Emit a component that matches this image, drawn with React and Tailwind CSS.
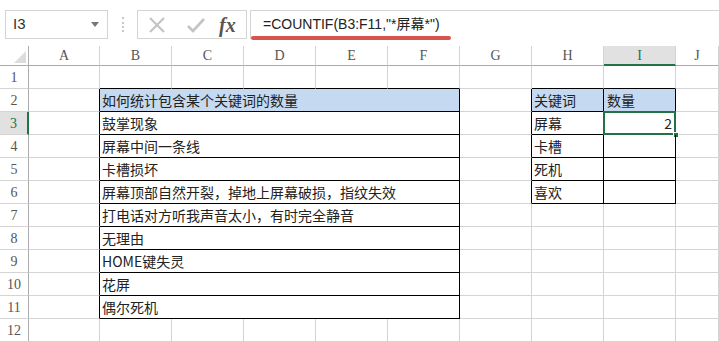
import React from 'react';

const COL_LETTERS = ['A', 'B', 'C', 'D', 'E', 'F', 'G', 'H', 'I', 'J'];

const ITEMS = [
    '如何统计包含某个关键词的数量',
    '鼓掌现象',
    '屏幕中间一条线',
    '卡槽损坏',
    '屏幕顶部自然开裂，掉地上屏幕破损，指纹失效',
    '打电话对方听我声音太小，有时完全静音',
    '无理由',
    'HOME键失灵',
    '花屏',
    '偶尔死机',
];

const KEYWORDS = [
    ['关键词', '数量'],
    ['屏幕', '2'],
    ['卡槽', ''],
    ['死机', ''],
    ['喜欢', ''],
];

const cjk = "font-['Noto_Sans_CJK_SC','Noto_Sans',sans-serif]";
const serif = "font-['Liberation_Serif','DejaVu_Serif',serif]";

function FormulaBar() {
    return (
        <div className="h-[46px] flex items-start pt-[10px] bg-white">
            <div className="ml-[5px] w-[103px] h-[29px] border border-[#d4d4d4] flex items-center justify-between pl-[7px] pr-[8px]">
                <span className="font-['Liberation_Sans',sans-serif] text-[15px] text-[#333]">I3</span>
                <svg width="8" height="5" viewBox="0 0 8 5"><path d="M0 0h8L4 5z" fill="#777" /></svg>
            </div>
            <div className="w-[29px] h-[29px] flex items-center justify-center">
                <div className="h-[15px] border-l-2 border-dotted border-[#c8c8c8]" />
            </div>
            <div className="w-[110px] h-[29px] border border-[#d4d4d4] flex items-center pl-[9px]">
                <svg width="20" height="18" viewBox="0 0 20 18" className="mr-[19px]">
                    <path d="M3 2 17 16M17 2 3 16" stroke="#c4c4c4" strokeWidth="2.2" />
                </svg>
                <svg width="20" height="18" viewBox="0 0 20 18" className="mr-[13px]">
                    <path d="M2 10l5 5L18 3" stroke="#c4c4c4" strokeWidth="2.6" fill="none" />
                </svg>
                <span className="font-['Liberation_Serif',serif] italic text-[20px] leading-none text-[#555] font-semibold">fx</span>
            </div>
            <div className="ml-[3px] flex-1 h-[29px] border-t border-l border-[#d4d4d4] relative">
                <div className="pl-[12px] pt-[3px] font-['Liberation_Sans','Noto_Sans_CJK_SC',sans-serif] text-[14px] text-[#222] leading-[20px]">
                    =COUNTIF(B3:F11,"*屏幕*")
                </div>
                <div className="absolute left-0 top-[25px] w-[200px] h-[4px] bg-[#d9534f] rounded-sm" />
            </div>
        </div>
    );
}

function HeaderRow() {
    return (
        <>
            <div className="h-[20px] border-r border-b border-[#ababab] flex items-end justify-end pr-[2px] pb-[2px]">
                <svg width="12" height="12" viewBox="0 0 12 12"><path d="M12 0v12H0z" fill="#dcdcdc" /></svg>
            </div>
            {COL_LETTERS.map((c) => (
                <div
                    key={c}
                    className={
                        c === 'I'
                            ? `h-[20px] bg-[#e1e1e1] border-r border-[#d4d4d4] border-b-2 border-b-[#217346] flex items-center justify-center text-[14px] text-[#217346] ${serif}`
                            : `h-[20px] border-r border-b border-[#d4d4d4] border-b-[#ababab] flex items-center justify-center text-[14px] text-[#555] ${serif}`
                    }
                >
                    {c}
                </div>
            ))}
        </>
    );
}

function RowHeader({ n }) {
    return n === 3 ? (
        <div className={`h-[23px] bg-[#e1e1e1] border-b border-[#d4d4d4] border-r-2 border-r-[#217346] flex items-center justify-center text-[14px] text-[#217346] ${serif}`}>
            {n}
        </div>
    ) : (
        <div className={`h-[23px] border-b border-[#d4d4d4] border-r border-r-[#ababab] flex items-center justify-center text-[14px] text-[#555] ${serif}`}>
            {n}
        </div>
    );
}

function Row({ n }) {
    const inTable = n >= 2 && n <= 11;
    const inKeys = n >= 2 && n <= 6;
    const kw = inKeys ? KEYWORDS[n - 2] : null;
    const head = n === 2;

    const plain = 'h-[23px] border-r border-b border-[#d4d4d4]';

    return (
        <>
            <RowHeader n={n} />
            <div className={inTable ? 'h-[23px] border-r border-r-black border-b border-b-[#d4d4d4]' : plain} />
            {inTable ? (
                <div className={`col-span-5 h-[23px] border-r border-b border-black flex items-center px-[2px] text-[14px] text-[#222] whitespace-nowrap ${cjk} ${head ? 'bg-[#c5d9f1]' : ''}`}>
                    {ITEMS[n - 2]}
                </div>
            ) : n === 1 ? (
                ['B', 'C', 'D', 'E', 'F'].map((c) => (
                    <div key={c} className="h-[23px] border-r border-r-[#d4d4d4] border-b border-b-black" />
                ))
            ) : (
                ['B', 'C', 'D', 'E', 'F'].map((c) => <div key={c} className={plain} />)
            )}
            <div className={inKeys ? 'h-[23px] border-r border-r-black border-b border-b-[#d4d4d4]' : plain} />
            {inKeys ? (
                <>
                    <div className={`h-[23px] border-r border-b border-black flex items-center px-[2px] text-[14px] text-[#222] ${cjk} ${head ? 'bg-[#c5d9f1]' : ''}`}>
                        {kw[0]}
                    </div>
                    <div className={`relative h-[23px] border-r border-b border-black flex items-center px-[3px] text-[14px] text-[#222] ${cjk} ${head ? 'bg-[#c5d9f1]' : ''} ${n === 3 ? 'justify-end' : ''}`}>
                        {kw[1]}
                        {n === 3 && (
                            <>
                                <div className="absolute -left-px -top-px w-[calc(100%+2px)] h-[calc(100%+2px)] border-2 border-[#217346]" />
                                <div className="absolute -right-[4px] -bottom-[4px] w-[6px] h-[6px] bg-[#217346] border border-white" />
                            </>
                        )}
                    </div>
                </>
            ) : n === 1 ? (
                <>
                    <div className="h-[23px] border-r border-r-[#d4d4d4] border-b border-b-black" />
                    <div className="h-[23px] border-r border-r-[#d4d4d4] border-b border-b-black" />
                </>
            ) : (
                <>
                    <div className={plain} />
                    <div className={plain} />
                </>
            )}
            <div className={plain} />
        </>
    );
}

export default function App() {
    const rows = [1, 2, 3, 4, 5, 6, 7, 8, 9, 10, 11, 12];
    return (
        <div className="w-[719px] h-[341px] overflow-hidden bg-white">
            <FormulaBar />
            <div className="grid grid-cols-[29px_71px_72px_72px_72px_72px_72px_72px_72px_72px_1fr]">
                <HeaderRow />
                {rows.map((n) => (
                    <Row key={n} n={n} />
                ))}
            </div>
        </div>
    );
}
